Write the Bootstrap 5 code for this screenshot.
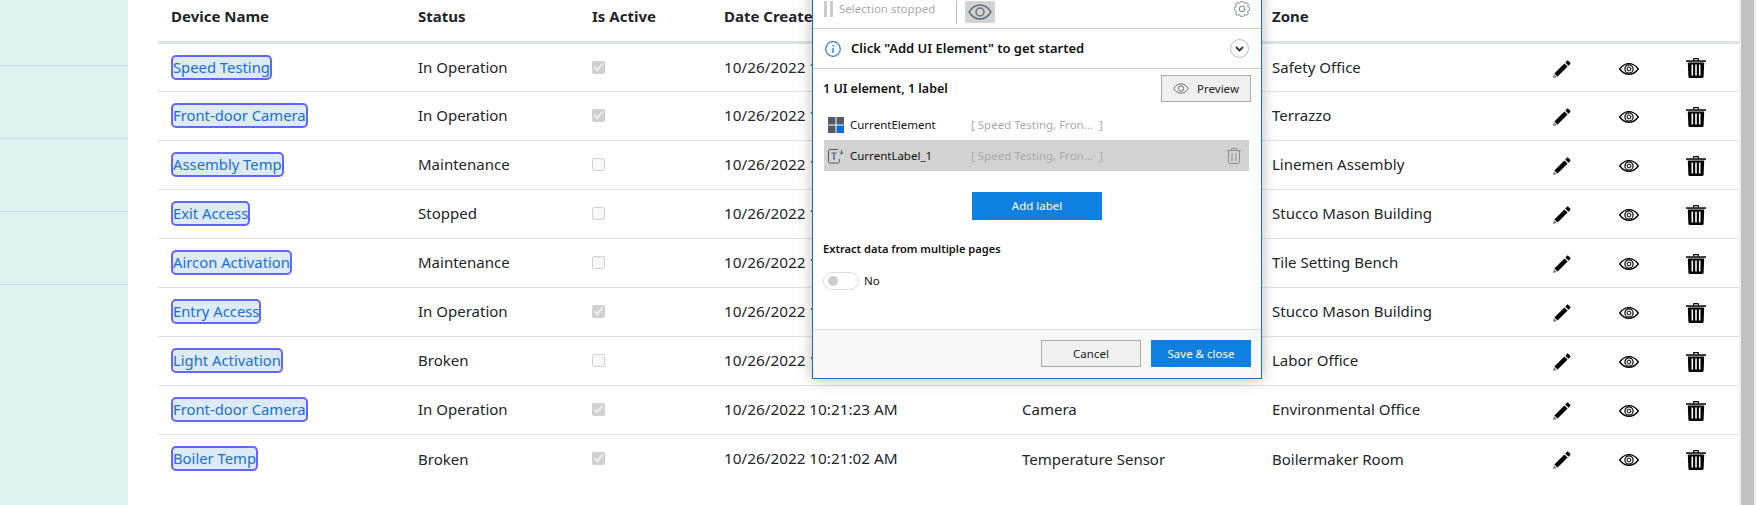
<!DOCTYPE html>
<html lang="en">
<head>
  <meta charset="UTF-8" />
  <title>Devices</title>
  <meta name="viewport" content="width=device-width, initial-scale=1" />
  <link href="https://cdn.jsdelivr.net/npm/bootstrap@5.3.0/dist/css/bootstrap.min.css" rel="stylesheet" />
  <script src="https://cdn.jsdelivr.net/npm/bootstrap@5.3.0/dist/js/bootstrap.bundle.min.js"></script>
  <style>
    body {
      font-family: "Noto Sans", "Open Sans", sans-serif;
      height: 505px;
      overflow: hidden;
      color: #212529;
    }

    .side-menu { width: 128px; background: #dff2f0; flex: none; }
    .side-item { height: 73px; border-bottom: 1px solid #c9dfdd; }
    .side-item:first-child { height: 66px; }

    .page-main { padding-left: 30px; flex: 1 1 auto; min-width: 0; }
    .fake-scroll { width: 17px; flex: none; background: #f1f1f1; padding: 0 2px; }
    .fake-thumb { background: #c1c1c1; height: 100%; }

    .device-table { table-layout: fixed; width: 1581px; font-size: 15px; margin: 0; }
    .device-table th { height: 42px; padding: 0 13px 8px; font-weight: 700; border-bottom: 3px solid #dee2e6; vertical-align: middle; }
    .device-table td { height: 49px; padding: 0 13px; vertical-align: middle; border-bottom: 1px solid #dee2e6; white-space: nowrap; }
    .device-table tr:last-child td { border-bottom: 0; }
    .device-table .icon-cell { padding: 0; text-align: center; }
    .device-table .icon-cell:last-child { padding-right: 10px; }
    .device-table .date-cell { font-size: 15.3px; }
    .device-table input { display: block; margin: 0; width: 13px; height: 13px; }
    .w-name { width: 247px; }
    .w-status { width: 174px; }
    .w-active { width: 132px; }
    .w-date { width: 298px; }
    .w-type { width: 250px; }
    .w-zone { width: 269px; }
    .w-icon { width: 67px; }
    .w-icon-end { width: 77px; }

    .picked {
      display: inline-block;
      color: #1b6fd8;
      text-decoration: none;
      background: #dcebf5;
      border: 2px solid #6464ff;
      border-radius: 5px;
      padding: 0;
      line-height: 21px;
      font-size: 14.8px;
    }

    .tool-panel {
      position: absolute;
      left: 684px;
      top: -16px;
      width: 450px;
      height: 395px;
      background: #fff;
      border: 1px solid #1a6fc4;
      box-shadow: 0 0 14px rgba(0, 0, 0, .28);
      font-size: 11.5px;
      color: #111;
    }
    .strip { height: 44px; padding: 16px 11px 0; border-bottom: 1px solid #ccc; flex: none; }
    .stop-bars { width: 9px; height: 16px; border-left: 3px solid #ccc; border-right: 3px solid #ccc; margin-right: 6px; }
    .stop-text { color: #aaa; font-size: 11.5px; width: 117px; line-height: 16px; }
    .strip-line { width: 1px; height: 23px; background: #bbb; margin-right: 8px; }
    .eye-btn { width: 30px; height: 22px; background: #d2d2d2; }
    .info-row { height: 40px; padding: 0 12px 0 12px; border-bottom: 1px solid #ccc; flex: none; font-size: 13px; font-weight: 600; }
    .info-text { margin-left: 2px; }
    .round-btn { width: 19px; height: 19px; border: 1px solid #bbb; border-radius: 50%; }
    .panel-body-area { padding: 6px 10px 0; flex: 1 1 auto; }
    .count-row { height: 27px; font-size: 12.5px; font-weight: 600; }
    .count-row span { padding-top: 2px; }
    .line-btn { background: #f0f0f0; border: 1px solid #aaa; color: #222; font-size: 11.5px; height: 27px; border-radius: 0; padding: 0; }
    .preview-btn { width: 90px; }
    .el-row { height: 31px; padding: 0 4px; margin-top: 7px; margin-right: 2px; margin-left: 1px; }
    .el-row + .el-row { margin-top: 0; }
    .el-row.active-row { background: #d2d2d2; }
    .el-name { width: 121px; margin-left: 6px; }
    .el-val { color: #aaa; flex: 1 1 auto; }
    .blue-btn { background: #1080e0; border: 0; color: #fff; font-size: 11.5px; height: 28px; border-radius: 0; padding: 0; }
    .blue-btn:hover { background: #1080e0; color: #fff; }
    .add-btn { width: 130px; margin: 21px auto 0; display: block; }
    .extract-title { font-weight: 600; font-size: 11.1px; margin-top: 21px; line-height: 16px; }
    .toggle-row { margin-top: 15px; }
    .switch-shape { width: 36px; height: 18px; border: 1px solid #ddd; border-radius: 9px; padding: 3px 4px; margin-right: 5px; }
    .switch-dot { width: 10px; height: 10px; background: #ccc; border-radius: 50%; }
    .panel-foot { height: 49px; background: #f8f8f8; border-top: 1px solid #ddd; padding: 10px 10px 0; gap: 10px; flex: none; }
    .foot-btn { width: 100px; height: 27px; }
  </style>
</head>
<body class="d-flex">
  <svg width="0" height="0" class="position-absolute">
    <symbol id="ic-pencil" viewBox="0 0 18 18">
      <path d="M4.6 16.6 1.4 13.4 11.4 3.4 14.6 6.6Z" fill="#000"/>
      <path d="M12.3 2.5 13.8.9c.5-.5 1.1-.5 1.6 0l1.7 1.7c.5.5.5 1.1 0 1.6l-1.6 1.5Z" fill="#000"/>
      <path d="M.9 14.2 3.8 17.1 0 18Z" fill="#777"/>
    </symbol>
    <symbol id="ic-eye" viewBox="0 0 20 12">
      <path d="M.7 6C3.5 2.4 6.5.7 10 .7S16.5 2.4 19.3 6C16.500 9.600 13.500 11.300 10 11.300S3.500 9.600.7 6Z" fill="none" stroke="#000" stroke-width="1.300"/>
      <circle cx="10" cy="6" r="4.100" fill="none" stroke="#000" stroke-width="1.200"/>
      <circle cx="10" cy="6" r="1.900" fill="none" stroke="#000" stroke-width="1"/>
    </symbol>
    <symbol id="ic-trash" viewBox="0 0 20 20">
      <path d="M7 2.500V1.200C7 .5 7.500 0 8.200 0h3.600c.7 0 1.200.5 1.200 1.200v1.300h-1.200V1.200H8.200v1.300Z" fill="#000"/>
      <rect x="0" y="2.300" width="20" height="1.500" fill="#000"/>
      <path d="M1.800 4.500h16.400l-.6 14.300c0 .7-.5 1.200-1.200 1.200H3.600c-.7 0-1.200-.5-1.200-1.200Z" fill="#000"/>
      <path d="M5.500 6.500h1.600v11H5.500ZM9.200 6.500h1.600v11H9.200ZM12.900 6.500h1.600v11h-1.600Z" fill="#fff"/>
    </symbol>
    <symbol id="ic-eye-gray" viewBox="0 0 24 16">
      <path d="M1 8C4 3.300 7.700 1 12 1s8 2.300 11 7c-3 4.700-6.700 7-11 7S4 12.700 1 8Z" fill="none" stroke="#666e75" stroke-width="1.500"/>
      <circle cx="12" cy="8" r="4" fill="none" stroke="#666e75" stroke-width="1.500"/>
    </symbol>
  </svg>

  <div class="side-menu">
    <div class="side-item"></div>
    <div class="side-item"></div>
    <div class="side-item"></div>
    <div class="side-item"></div>
  </div>

  <div class="page-main position-relative">
    <table class="table device-table">
      <thead>
        <tr>
          <th class="w-name">Device Name</th>
          <th class="w-status">Status</th>
          <th class="w-active">Is Active</th>
          <th class="w-date">Date Created</th>
          <th class="w-type">Device Type</th>
          <th class="w-zone">Zone</th>
          <th class="w-icon"></th>
          <th class="w-icon"></th>
          <th class="w-icon-end"></th>
        </tr>
      </thead>
      <tbody>
        <tr>
          <td><a href="#" class="picked">Speed Testing</a></td><td>In Operation</td><td><input type="checkbox" checked disabled /></td>
          <td class="date-cell">10/26/2022 10:21:23 AM</td><td>Speed Sensor</td><td>Safety Office</td>
          <td class="icon-cell"><svg width="18" height="18"><use href="#ic-pencil"/></svg></td><td class="icon-cell"><svg width="20" height="12"><use href="#ic-eye"/></svg></td><td class="icon-cell"><svg width="20" height="20"><use href="#ic-trash"/></svg></td>
        </tr>
        <tr>
          <td><a href="#" class="picked">Front-door Camera</a></td><td>In Operation</td><td><input type="checkbox" checked disabled /></td>
          <td class="date-cell">10/26/2022 10:21:23 AM</td><td>Camera</td><td>Terrazzo</td>
          <td class="icon-cell"><svg width="18" height="18"><use href="#ic-pencil"/></svg></td><td class="icon-cell"><svg width="20" height="12"><use href="#ic-eye"/></svg></td><td class="icon-cell"><svg width="20" height="20"><use href="#ic-trash"/></svg></td>
        </tr>
        <tr>
          <td><a href="#" class="picked">Assembly Temp</a></td><td>Maintenance</td><td><input type="checkbox" disabled /></td>
          <td class="date-cell">10/26/2022 10:21:23 AM</td><td>Temperature Sensor</td><td>Linemen Assembly</td>
          <td class="icon-cell"><svg width="18" height="18"><use href="#ic-pencil"/></svg></td><td class="icon-cell"><svg width="20" height="12"><use href="#ic-eye"/></svg></td><td class="icon-cell"><svg width="20" height="20"><use href="#ic-trash"/></svg></td>
        </tr>
        <tr>
          <td><a href="#" class="picked">Exit Access</a></td><td>Stopped</td><td><input type="checkbox" disabled /></td>
          <td class="date-cell">10/26/2022 10:21:23 AM</td><td>Access Control</td><td>Stucco Mason Building</td>
          <td class="icon-cell"><svg width="18" height="18"><use href="#ic-pencil"/></svg></td><td class="icon-cell"><svg width="20" height="12"><use href="#ic-eye"/></svg></td><td class="icon-cell"><svg width="20" height="20"><use href="#ic-trash"/></svg></td>
        </tr>
        <tr>
          <td><a href="#" class="picked">Aircon Activation</a></td><td>Maintenance</td><td><input type="checkbox" disabled /></td>
          <td class="date-cell">10/26/2022 10:21:23 AM</td><td>Switch</td><td>Tile Setting Bench</td>
          <td class="icon-cell"><svg width="18" height="18"><use href="#ic-pencil"/></svg></td><td class="icon-cell"><svg width="20" height="12"><use href="#ic-eye"/></svg></td><td class="icon-cell"><svg width="20" height="20"><use href="#ic-trash"/></svg></td>
        </tr>
        <tr>
          <td><a href="#" class="picked">Entry Access</a></td><td>In Operation</td><td><input type="checkbox" checked disabled /></td>
          <td class="date-cell">10/26/2022 10:21:23 AM</td><td>Access Control</td><td>Stucco Mason Building</td>
          <td class="icon-cell"><svg width="18" height="18"><use href="#ic-pencil"/></svg></td><td class="icon-cell"><svg width="20" height="12"><use href="#ic-eye"/></svg></td><td class="icon-cell"><svg width="20" height="20"><use href="#ic-trash"/></svg></td>
        </tr>
        <tr>
          <td><a href="#" class="picked">Light Activation</a></td><td>Broken</td><td><input type="checkbox" disabled /></td>
          <td class="date-cell">10/26/2022 10:21:23 AM</td><td>Switch</td><td>Labor Office</td>
          <td class="icon-cell"><svg width="18" height="18"><use href="#ic-pencil"/></svg></td><td class="icon-cell"><svg width="20" height="12"><use href="#ic-eye"/></svg></td><td class="icon-cell"><svg width="20" height="20"><use href="#ic-trash"/></svg></td>
        </tr>
        <tr>
          <td><a href="#" class="picked">Front-door Camera</a></td><td>In Operation</td><td><input type="checkbox" checked disabled /></td>
          <td class="date-cell">10/26/2022 10:21:23 AM</td><td>Camera</td><td>Environmental Office</td>
          <td class="icon-cell"><svg width="18" height="18"><use href="#ic-pencil"/></svg></td><td class="icon-cell"><svg width="20" height="12"><use href="#ic-eye"/></svg></td><td class="icon-cell"><svg width="20" height="20"><use href="#ic-trash"/></svg></td>
        </tr>
        <tr>
          <td><a href="#" class="picked">Boiler Temp</a></td><td>Broken</td><td><input type="checkbox" checked disabled /></td>
          <td class="date-cell">10/26/2022 10:21:02 AM</td><td>Temperature Sensor</td><td>Boilermaker Room</td>
          <td class="icon-cell"><svg width="18" height="18"><use href="#ic-pencil"/></svg></td><td class="icon-cell"><svg width="20" height="12"><use href="#ic-eye"/></svg></td><td class="icon-cell"><svg width="20" height="20"><use href="#ic-trash"/></svg></td>
        </tr>
      </tbody>
    </table>

    <div class="tool-panel d-flex flex-column">
      <div class="strip d-flex align-items-start">
        <div class="stop-bars"></div>
        <div class="stop-text">Selection stopped</div>
        <div class="strip-line"></div>
        <div class="eye-btn d-flex align-items-center justify-content-center"><svg width="24" height="16"><use href="#ic-eye-gray"/></svg></div>
        <svg class="ms-auto" width="16" height="16" viewBox="0 0 16 16" fill="none" stroke="#666e75" stroke-width=".9">
          <circle cx="8" cy="8" r="2.800"/>
          <path d="M9.800 1.300c-.5-1.800-3.100-1.800-3.600 0l-.1.400a.9.900 0 0 1-1.300.5l-.3-.2c-1.600-.9-3.400.9-2.500 2.500l.2.300a.9.900 0 0 1-.5 1.300l-.4.100c-1.800.5-1.800 3.100 0 3.600l.4.100a.9.900 0 0 1 .5 1.300l-.2.300c-.9 1.600.9 3.400 2.500 2.500l.3-.2a.9.900 0 0 1 1.300.5l.1.400c.5 1.800 3.100 1.800 3.600 0l.1-.4a.9.900 0 0 1 1.300-.5l.3.2c1.600.9 3.400-.9 2.500-2.500l-.2-.3a.9.900 0 0 1 .5-1.300l.4-.1c1.800-.5 1.800-3.100 0-3.600l-.4-.1a.9.900 0 0 1-.5-1.300l.2-.3c.9-1.600-.9-3.400-2.500-2.500l-.3.2a.9.900 0 0 1-1.300-.5Z"/>
        </svg>
      </div>

      <div class="info-row d-flex align-items-center">
        <svg class="me-2" width="16" height="16" viewBox="0 0 16 16" fill="none" stroke="#1a80e5" stroke-width="1.200">
          <circle cx="8" cy="8" r="7.300"/>
          <path d="M8 7v5M8 4v1.500" stroke-width="1.400"/>
        </svg>
        <span class="info-text">Click "Add UI Element" to get started</span>
        <div class="round-btn ms-auto d-flex align-items-center justify-content-center">
          <svg width="9" height="6" viewBox="0 0 9 6" fill="none" stroke="#333" stroke-width="1.800"><path d="M1 1l3.500 3.500L8 1"/></svg>
        </div>
      </div>

      <div class="panel-body-area">
        <div class="count-row d-flex align-items-center justify-content-between">
          <span>1 UI element, 1 label</span>
          <button type="button" class="btn line-btn preview-btn d-flex align-items-center justify-content-center gap-2"><svg width="16" height="11"><use href="#ic-eye-gray"/></svg>Preview</button>
        </div>
        <div class="el-row d-flex align-items-center">
          <svg width="16" height="16" viewBox="0 0 16 16">
            <rect width="7.500" height="7.500" fill="#4f5b66"/><rect x="8.500" width="7.500" height="7.500" fill="#4f5b66"/>
            <rect y="8.500" width="7.500" height="7.500" fill="#4f5b66"/><rect x="8.500" y="8.500" width="7.500" height="7.500" fill="#0a6ae0"/>
          </svg>
          <span class="el-name">CurrentElement</span>
          <span class="el-val">[ Speed Testing, Fron...&nbsp; ]</span>
        </div>
        <div class="el-row active-row d-flex align-items-center">
          <svg width="16" height="16" viewBox="0 0 16 16" fill="none" stroke="#4f5b66" stroke-width="1">
            <path d="M10 1.500H2c-.8 0-1.500.7-1.500 1.500v10.500c0 .8.7 1.500 1.500 1.500h8c.8 0 1.500-.7 1.500-1.500V11"/>
            <path d="M3.500 5h5M6 5v6M5 11h2" stroke-width="1.200"/>
            <path d="M13.500 2v4M11.800 4.500l1.700 1.700 1.700-1.700"/>
          </svg>
          <span class="el-name">CurrentLabel_1</span>
          <span class="el-val">[ Speed Testing, Fron...&nbsp; ]</span>
          <svg class="me-1" width="14" height="16" viewBox="0 0 14 16" fill="none" stroke="#8a8f94" stroke-width="1">
            <path d="M0 2.500h14M4.500 2.500V1c0-.3.200-.5.500-.5h4c.3 0 .5.200.5.500v1.500M1.500 2.500V14c0 .8.700 1.500 1.500 1.500h8c.8 0 1.500-.7 1.500-1.500V2.500M5 5.500V13M9 5.500V13"/>
          </svg>
        </div>
        <button type="button" class="btn blue-btn add-btn">Add label</button>
        <div class="extract-title">Extract data from multiple pages</div>
        <div class="toggle-row d-flex align-items-center">
          <div class="switch-shape"><div class="switch-dot"></div></div>
          <span>No</span>
        </div>
      </div>

      <div class="panel-foot d-flex justify-content-end">
        <button type="button" class="btn line-btn foot-btn">Cancel</button>
        <button type="button" class="btn blue-btn foot-btn">Save &amp; close</button>
      </div>
    </div>
  </div>

  <div class="fake-scroll"><div class="fake-thumb"></div></div>
</body>
</html>
